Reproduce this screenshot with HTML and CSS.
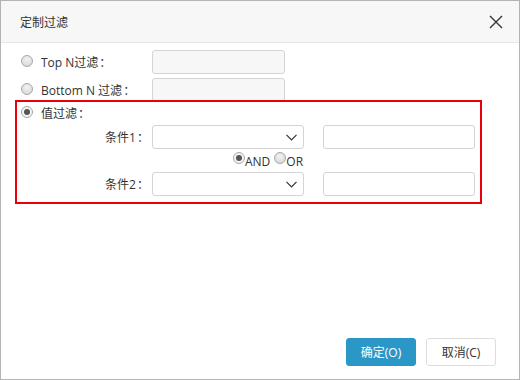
FILE: index.html
```html
<!DOCTYPE html>
<html lang="zh-CN">
<head>
    <meta charset="UTF-8">
    <meta name="viewport" content="width=device-width, initial-scale=1.0">
    <title>定制过滤</title>
    <link rel="stylesheet" href="styles.css">
</head>
<body>
    <div class="dialog">
        <div class="dialog-header">
            <span class="dialog-title">定制过滤</span>
            <span class="close">
                <svg width="14" height="14" viewBox="0 0 14 14">
                    <path d="M1 1 L13 13 M13 1 L1 13" stroke="#333" stroke-width="1.4" fill="none"/>
                </svg>
            </span>
        </div>
        <div class="dialog-body">
            <div class="row">
                <span class="radio"></span>
                <span class="label">Top N过滤<span class="colon">：</span></span>
                <span class="input small disabled"></span>
            </div>
            <div class="row">
                <span class="radio"></span>
                <span class="label">Bottom N 过滤<span class="colon">：</span></span>
                <span class="input small disabled"></span>
            </div>
            <div class="highlight">
                <div class="row head">
                    <span class="radio checked"></span>
                    <span class="label">值过滤<span class="colon">：</span></span>
                </div>
                <div class="cond">
                    <span class="cond-label">条件1<span class="colon">：</span></span>
                    <span class="input select">
                        <svg width="11" height="7" viewBox="0 0 11 7"><path d="M0.5 0.8 L5.5 5.8 L10.5 0.8" stroke="#333" stroke-width="1.2" fill="none"/></svg>
                    </span>
                    <span class="input wide"></span>
                </div>
                <div class="logic">
                    <span class="radio checked tiny"></span><span class="logic-text">AND</span>
                    <span class="radio tiny"></span><span class="logic-text">OR</span>
                </div>
                <div class="cond">
                    <span class="cond-label">条件2<span class="colon">：</span></span>
                    <span class="input select">
                        <svg width="11" height="7" viewBox="0 0 11 7"><path d="M0.5 0.8 L5.5 5.8 L10.5 0.8" stroke="#333" stroke-width="1.2" fill="none"/></svg>
                    </span>
                    <span class="input wide"></span>
                </div>
            </div>
        </div>
        <div class="dialog-footer">
            <button class="btn primary">确定(O)</button>
            <button class="btn">取消(C)</button>
        </div>
    </div>
</body>
</html>
```

FILE: styles.css
```css
body {
    margin: 0;
    font-family: "Open Sans", "Noto Sans CJK SC", sans-serif;
    font-size: 12px;
    color: #333;
    background: #fff;
}
.dialog {
    width: 520px;
    height: 380px;
    box-sizing: border-box;
    border: 1px solid #b4b4b4;
    display: flex;
    flex-direction: column;
}
.dialog-header {
    height: 41px;
    border-bottom: 1px solid #e6e6e6;
    background-color: #f7f7f7;
    display: flex;
    align-items: center;
    justify-content: space-between;
    padding: 0 16px 0 19px;
}
.dialog-title {
    font-size: 12px;
    color: #333;
}
.close {
    display: flex;
}
.colon {
    font-family: "Noto Sans CJK TC", sans-serif;
    margin-left: 1px;
}
.dialog-body {
    flex: 1;
    padding: 7px 0 0 14px;
}
.row {
    display: flex;
    align-items: center;
    height: 24px;
    padding-left: 6px;
    margin-bottom: 4px;
}
.radio {
    width: 10px;
    height: 10px;
    border: 1px solid #a8a8a8;
    border-radius: 50%;
    background: radial-gradient(circle at 50% 35%, #f2f2f2, #d4d4d4);
    margin-right: 8px;
    flex: none;
    position: relative;
    margin-top: -2px;
}
.radio.checked {
    background: #f4f4f4;
}
.radio.checked::after {
    content: "";
    position: absolute;
    left: 2px;
    top: 2px;
    width: 6px;
    height: 6px;
    border-radius: 50%;
    background: #555;
}
.label {
    width: 111px;
    white-space: nowrap;
}
.input {
    display: flex;
    align-items: center;
    box-sizing: border-box;
    height: 24px;
    border: 1px solid #d4d4d4;
    border-radius: 3px;
    background: #fff;
}
.input.disabled {
    background: #f7f7f7;
}
.input.small {
    width: 133px;
}
.input.select {
    width: 152px;
    justify-content: flex-end;
    padding-right: 6px;
}
.input.wide {
    width: 152px;
    margin-left: 19px;
}
.highlight {
    width: 467px;
    height: 104px;
    box-sizing: border-box;
    border: 2px solid #e8000b;
    margin-top: -6px;
    position: relative;
}
.highlight .row {
    padding-left: 4px;
    height: 22px;
    margin-bottom: 1px;
}
.cond {
    display: flex;
    align-items: center;
    height: 24px;
}
.cond-label {
    width: 135px;
    text-align: right;
    box-sizing: border-box;
    padding-right: 3px;
}
.logic {
    display: flex;
    align-items: center;
    height: 23px;
    padding-left: 216px;
}
.radio.tiny {
    margin-right: 0;
    margin-top: -5px;
}
.logic-text {
    margin-right: 4px;
    padding-top: 2px;
}
.dialog-footer {
    display: flex;
    justify-content: flex-end;
    gap: 10px;
    padding: 0 23px 13px 0;
}
.btn {
    font-family: "Open Sans", "Noto Sans CJK SC", sans-serif;
    font-size: 12px;
    height: 28px;
    width: 70px;
    border: 1px solid #ddd;
    border-radius: 3px;
    background: #fff;
    color: #333;
    padding: 0;
}
.btn.primary {
    background: #2a97c7;
    border-color: #2a97c7;
    color: #fff;
}
```
